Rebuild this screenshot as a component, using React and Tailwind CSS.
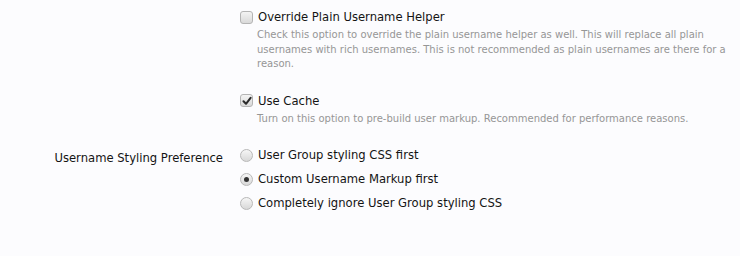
import React, { useState } from "react";

const font = { fontFamily: "Tahoma, 'DejaVu Sans', sans-serif" };

function Box({ checked }) {
  return (
    <span className="w-[13px] h-[13px] shrink-0 rounded-[3px] border border-[#b4b4b4] bg-gradient-to-b from-[#f4f4f4] to-[#d9d9d9] flex items-center justify-center">
      {checked && (
        <svg width="10" height="10" viewBox="0 0 10 10">
          <path d="M1.5 5.2 L4 7.8 L8.6 1.8" fill="none" stroke="#2a2a2a" strokeWidth="2" strokeLinecap="round" strokeLinejoin="round" />
        </svg>
      )}
    </span>
  );
}

function Radio({ checked }) {
  return (
    <span className="w-[13px] h-[13px] shrink-0 rounded-full border border-[#b8b8b8] bg-gradient-to-b from-[#f6f6f6] to-[#d8d8d8] flex items-center justify-center">
      {checked && <span className="w-[5px] h-[5px] rounded-full bg-[#333]" />}
    </span>
  );
}

function CheckRow({ label, hint, checked }) {
  const [on, setOn] = useState(!!checked);
  return (
    <div className="flex flex-col">
      <label onClick={() => setOn(!on)} className="flex items-center gap-[5px] text-[11.6px] text-[#141414] leading-[18px] cursor-pointer">
        <Box checked={on} />
        {label}
      </label>
      <p className="pl-[17px] pt-[2px] text-[10px] leading-[14.5px] text-[#969696] w-[490px]">{hint}</p>
    </div>
  );
}

export default function App() {
  const [pref, setPref] = useState("custom");
  const options = [
    { id: "group", label: "User Group styling CSS first" },
    { id: "custom", label: "Custom Username Markup first" },
    { id: "ignore", label: "Completely ignore User Group styling CSS" },
  ];

  return (
    <div className="w-[740px] h-[256px] bg-[#fcfcfe] pt-[8px]" style={font}>
      <div className="grid grid-cols-[223px_1fr] gap-x-[17px]">
        <div />
        <CheckRow
          label="Override Plain Username Helper"
          hint="Check this option to override the plain username helper as well. This will replace all plain usernames with rich usernames. This is not recommended as plain usernames are there for a reason."
        />
        <div />
        <div className="mt-[20px]">
          <CheckRow
            checked
            label="Use Cache"
            hint="Turn on this option to pre-build user markup. Recommended for performance reasons."
          />
        </div>
        <div className="mt-[19px] text-right text-[11.6px] text-[#141414] leading-[18px] pt-[4px]">
          Username Styling Preference
        </div>
        <div className="mt-[20px] flex flex-col gap-[6px]">
          {options.map((o) => (
            <label
              key={o.id}
              onClick={() => setPref(o.id)}
              className="flex items-center gap-[5px] text-[11.6px] text-[#141414] leading-[18px] cursor-pointer"
            >
              <Radio checked={pref === o.id} />
              {o.label}
            </label>
          ))}
        </div>
      </div>
    </div>
  );
}
